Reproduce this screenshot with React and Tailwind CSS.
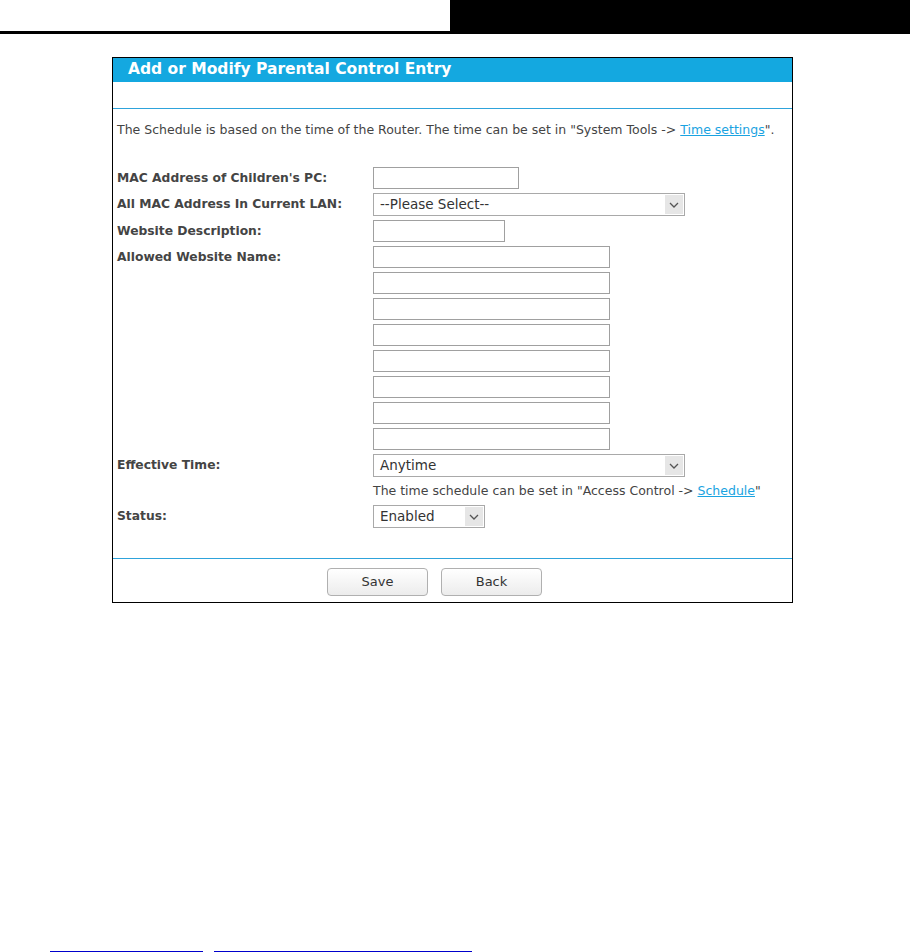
import React from "react";

const font = { fontFamily: '"DejaVu Sans", Verdana, sans-serif' };

function Arrow() {
  return (
    <div className="flex h-full w-[18px] items-center justify-center bg-[#e6e6e6]">
      <svg width="10" height="6" viewBox="0 0 10 6" fill="none">
        <path d="M1 1l4 4 4-4" stroke="#555" strokeWidth="1.3" />
      </svg>
    </div>
  );
}

function FakeSelect({ width, value }) {
  return (
    <div
      className="flex h-[23px] items-stretch border border-[#a9a9a9] bg-white p-[1px]"
      style={{ width }}
    >
      <div className="flex flex-1 items-center pl-[5px] text-[13.5px] text-[#333]">{value}</div>
      <Arrow />
    </div>
  );
}

function Input({ w }) {
  return <div className={`h-[22px] border border-[#a0a0a0] bg-white ${w}`} />;
}

function Row({ label, children, className = "" }) {
  return (
    <div className={`flex items-start ${className}`}>
      <div className="flex h-[22px] w-[256px] items-center text-[12.3px] font-bold text-[#444]">
        {label}
      </div>
      <div className="flex flex-col gap-[4px]">{children}</div>
    </div>
  );
}

export default function App() {
  return (
    <div className="relative h-[952px] w-[910px] overflow-hidden bg-white" style={font}>
      <div className="flex h-[34px]">
        <div className="w-[450px] border-b-[3px] border-black" />
        <div className="flex-1 bg-black" />
      </div>

      <div className="ml-[112px] mt-[23px] flex w-[681px] flex-col border border-black">
        <div className="flex h-[24px] items-center bg-[#14a8e0] pl-[15px] text-[15.5px] font-bold text-white">
          Add or Modify Parental Control Entry
        </div>
        <div className="h-[27px] border-b border-[#2ea3db]" />
        <div className="mt-[11px] flex h-[20px] items-center pl-[4px] text-[12.5px] text-[#444]">
          The Schedule is based on the time of the Router. The time can be set in "System Tools -&gt;&nbsp;
          <span className="text-[#1aa3e1] underline">Time settings</span>".
        </div>

        <div className="mt-[27px] flex flex-col gap-[4px] pl-[4px]">
          <Row label="MAC Address of Children's PC:">
            <Input w="w-[146px]" />
          </Row>
          <Row label="All MAC Address In Current LAN:">
            <FakeSelect width="312px" value="--Please Select--" />
          </Row>
          <Row label="Website Description:">
            <Input w="w-[132px]" />
          </Row>
          <Row label="Allowed Website Name:">
            <Input w="w-[237px]" />
            <Input w="w-[237px]" />
            <Input w="w-[237px]" />
            <Input w="w-[237px]" />
            <Input w="w-[237px]" />
            <Input w="w-[237px]" />
            <Input w="w-[237px]" />
            <Input w="w-[237px]" />
          </Row>
          <Row label="Effective Time:">
            <FakeSelect width="312px" value="Anytime" />
          </Row>
          <div className="flex h-[20px] items-end pl-[256px] text-[12.5px] text-[#444]">
            The time schedule can be set in "Access Control -&gt;&nbsp;
            <span className="text-[#1aa3e1] underline">Schedule</span>"
          </div>
          <Row label="Status:">
            <FakeSelect width="112px" value="Enabled" />
          </Row>
        </div>

        <div className="mt-[30px] border-b border-[#2ea3db]" />
        <div className="flex gap-[13px] pb-[6px] pl-[214px] pt-[9px]">
          <div className="flex h-[28px] w-[101px] items-center justify-center rounded-[4px] border border-[#b0b0b0] bg-gradient-to-b from-white to-[#ececec] text-[13px] text-[#333]">
            Save
          </div>
          <div className="flex h-[28px] w-[101px] items-center justify-center rounded-[4px] border border-[#b0b0b0] bg-gradient-to-b from-white to-[#ececec] text-[13px] text-[#333]">
            Back
          </div>
        </div>
      </div>

      <div className="ml-[50px] mt-[348px] flex gap-[11px]">
        <div className="h-[2px] w-[153px] bg-[#0000cc]" />
        <div className="h-[2px] w-[258px] bg-[#0000cc]" />
      </div>
    </div>
  );
}
